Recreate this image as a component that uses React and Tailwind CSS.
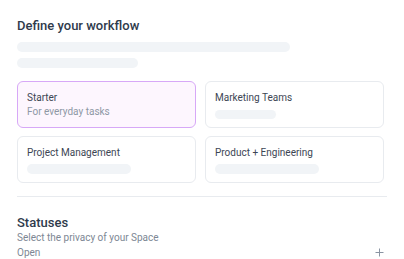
export default function App() {
  const font = { fontFamily: 'Roboto, "Noto Sans", sans-serif' };
  return (
    <div className="w-[404px] h-[259px] bg-white overflow-hidden" style={font}>
      <div className="pl-[17px] pr-[17px] pt-[17px]">
        <h1 className="text-[13px] leading-[18px] font-medium text-[#2f3b4c]">Define your workflow</h1>
        <div className="mt-[7px] h-[10px] w-[273px] rounded-full bg-[#f1f4f7]" />
        <div className="mt-[6px] h-[10px] w-[121px] rounded-full bg-[#f1f4f7]" />
        <div className="mt-[13px] grid grid-cols-2 gap-x-[9px] gap-y-[8px] w-[367px]">
          <div className="h-[47px] rounded-[6px] border border-[#d7a8f7] bg-[#fdf6fe] px-[9px] pt-[9px]">
            <div className="text-[10px] leading-[14px] text-[#3c4654]">Starter</div>
            <div className="text-[10px] leading-[14px] text-[#8e98a5]">For everyday tasks</div>
          </div>
          <div className="h-[47px] rounded-[6px] border border-[#e8ebef] bg-white px-[9px] pt-[9px]">
            <div className="text-[10px] leading-[14px] text-[#3c4654]">Marketing Teams</div>
            <div className="mt-[5px] h-[9px] w-[61px] rounded-full bg-[#f1f4f7]" />
          </div>
          <div className="h-[47px] rounded-[6px] border border-[#e8ebef] bg-white px-[9px] pt-[9px]">
            <div className="text-[10px] leading-[14px] text-[#3c4654]">Project Management</div>
            <div className="mt-[4px] h-[10px] w-[104px] rounded-full bg-[#f1f4f7]" />
          </div>
          <div className="h-[47px] rounded-[6px] border border-[#e8ebef] bg-white px-[9px] pt-[9px]">
            <div className="text-[10px] leading-[14px] text-[#3c4654]">Product + Engineering</div>
            <div className="mt-[4px] h-[10px] w-[104px] rounded-full bg-[#f1f4f7]" />
          </div>
        </div>
        <div className="mt-[13px] h-px w-[370px] bg-[#e8ebef]" />
        <div className="mt-[17px] text-[13px] leading-[17px] font-medium text-[#2f3b4c]">Statuses</div>
        <div className="-mt-[1px] text-[10px] leading-[15px] text-[#7d8794]">Select the privacy of your Space</div>
        <div className="flex items-center justify-between w-[367px]">
          <span className="text-[10px] leading-[15px] text-[#7d8794]">Open</span>
          <svg width="9" height="9" viewBox="0 0 9 9">
            <path d="M4.5 0.5v8M0.5 4.5h8" stroke="#8a94a2" strokeWidth="1" />
          </svg>
        </div>
      </div>
    </div>
  );
}
